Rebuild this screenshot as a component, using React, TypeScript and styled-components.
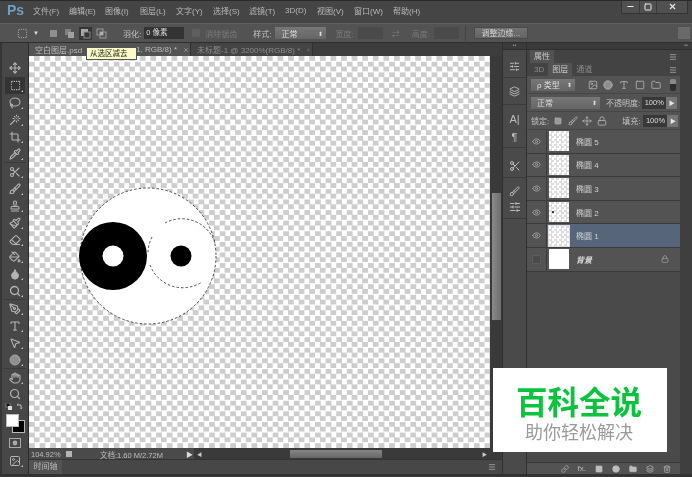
import React from "react";
import styled, { createGlobalStyle } from "styled-components";
import {
  Brush,
  Circle,
  Crop,
  Droplet,
  Eraser,
  Eye,
  Folder,
  Hand,
  Image,
  Lasso,
  Layers,
  Link,
  Lock,
  Menu,
  Minus,
  MousePointer2,
  Move,
  PaintBucket,
  Paintbrush,
  PenTool,
  Pipette,
  Scissors,
  Search,
  SlidersHorizontal,
  Square,
  SquareDashed,
  Stamp,
  Trash2,
  Type,
  Wand,
  X,
} from "lucide-react";

const GlobalStyle = createGlobalStyle`
  html, body {
    margin: 0;
    padding: 0;
    background: #2f2f2f;
  }
  * {
    box-sizing: border-box;
  }
`;

const fontStack = `"Liberation Sans", "Noto Sans CJK SC", sans-serif`;

const Window = styled.div`
  position: relative;
  width: 692px;
  height: 477px;
  overflow: hidden;
  display: flex;
  flex-direction: column;
  padding-bottom: 3px;
  background: #333;
  color: #c4c4c4;
  font-family: ${fontStack};
  font-size: 8px;
  filter: blur(0.3px);
`;

const MenuBar = styled.div`
  height: 23px;
  display: flex;
  align-items: center;
  padding-bottom: 4px;
  background: #454545;
  border-top: 1px solid #2a2a2a;
  flex: none;
`;

const Logo = styled.div`
  width: 33px;
  padding-left: 7px;
  font-size: 14px;
  font-weight: 700;
  color: #6f9fc6;
`;

const MenuItem = styled.span<{ $w: number }>`
  width: ${(p) => p.$w}px;
  flex: none;
  font-size: 8px;
  color: #b8b8b8;
`;

const WindowButtons = styled.div`
  margin-left: auto;
  margin-right: 4px;
  margin-top: -6px;
  height: 13px;
  display: flex;
  background: #505050;
  border: 1px solid #333;
  border-top: none;
`;

const WindowButton = styled.div<{ $w: number }>`
  width: ${(p) => p.$w}px;
  display: flex;
  align-items: center;
  justify-content: center;
  color: #e8e8e8;
  border-left: 1px solid #393939;
  &:first-child {
    border-left: none;
  }
`;

const OptionsBar = styled.div`
  height: 20px;
  flex: none;
  display: flex;
  align-items: center;
  background: #535353;
  border-top: 1px solid #5e5e5e;
  border-bottom: 1px solid #2e2e2e;
  padding-left: 17px;
`;

const OptionIcon = styled.div<{ $active?: boolean; $ml?: number }>`
  width: 13px;
  height: 13px;
  margin-left: ${(p) => p.$ml ?? 3}px;
  display: flex;
  align-items: center;
  justify-content: center;
  background: ${(p) => (p.$active ? "#363636" : "transparent")};
`;

const OptionLabel = styled.span<{ $ml: number; $dim?: boolean }>`
  margin-left: ${(p) => p.$ml}px;
  flex: none;
  font-size: 8px;
  color: ${(p) => (p.$dim ? "#7a7a7a" : "#c4c4c4")};
`;

const DarkInput = styled.div<{ $w: number; $ml: number; $flat?: boolean }>`
  width: ${(p) => p.$w}px;
  margin-left: ${(p) => p.$ml}px;
  height: 12px;
  flex: none;
  background: ${(p) => (p.$flat ? "#4a4a4a" : "#333")};
  color: #ddd;
  font-size: 7.5px;
  line-height: 12px;
  padding-left: 2px;
`;

const Select = styled.div<{ $w: number; $ml: number }>`
  width: ${(p) => p.$w}px;
  margin-left: ${(p) => p.$ml}px;
  height: 12px;
  flex: none;
  display: flex;
  justify-content: space-between;
  align-items: center;
  padding: 0 3px 0 6px;
  background: linear-gradient(#777, #656565);
  color: #dedede;
  font-size: 8px;
`;

const Caret = styled.span<{ $ml?: number }>`
  margin-left: ${(p) => p.$ml ?? 0}px;
  font-size: 6px;
  color: #ddd;
`;

const CheckBox = styled.div<{ $ml: number }>`
  width: 8px;
  height: 8px;
  margin-left: ${(p) => p.$ml}px;
  flex: none;
  background: #5f5f5f;
`;

const Separator = styled.div<{ $ml: number }>`
  width: 1px;
  height: 15px;
  margin-left: ${(p) => p.$ml}px;
  flex: none;
  background: #434343;
`;

const RefineButton = styled.div`
  width: 54px;
  height: 12px;
  margin-left: 8px;
  flex: none;
  text-align: center;
  line-height: 11px;
  font-size: 8px;
  color: #d0d0d0;
  background: linear-gradient(#727272, #646464);
  border: 1px solid #4a4a4a;
`;

const EdgeButton = styled.div`
  width: 12px;
  height: 12px;
  margin-left: auto;
  margin-right: 2px;
  flex: none;
  background: #6a6a6a;
`;

const Body = styled.div`
  flex: 1;
  display: flex;
  min-height: 0;
`;

const ToolColumn = styled.div`
  width: 29px;
  flex: none;
  display: flex;
  flex-direction: column;
  align-items: center;
  background: #474747;
  border-left: 2px solid #363636;
  border-right: 1px solid #2b2b2b;
  padding-top: 16px;
`;

const Tool = styled.div<{ $active?: boolean; $flyout?: boolean; $mt?: number }>`
  position: relative;
  width: 20px;
  height: 17px;
  flex: none;
  margin-top: ${(p) => p.$mt ?? 0}px;
  display: flex;
  align-items: center;
  justify-content: center;
  color: #b4b4b4;
  background: ${(p) => (p.$active ? "#343434" : "transparent")};
  &::after {
    content: "";
    display: ${(p) => (p.$flyout ? "block" : "none")};
    position: absolute;
    right: 2px;
    bottom: 2px;
    border-left: 2px solid transparent;
    border-bottom: 2px solid #c8c8c8;
  }
`;

const ToolDivider = styled.div<{ $mb?: number }>`
  width: 22px;
  height: 1px;
  flex: none;
  margin-bottom: ${(p) => p.$mb ?? 0}px;
  background: #3a3a3a;
`;

const ColorSwatches = styled.div`
  position: relative;
  width: 20px;
  height: 32px;
  flex: none;
`;

const Swatch = styled.div<{ $fg?: boolean }>`
  position: absolute;
  width: 13px;
  height: 13px;
  left: ${(p) => (p.$fg ? 1 : 7)}px;
  top: ${(p) => (p.$fg ? 12 : 18)}px;
  background: ${(p) => (p.$fg ? "#fff" : "#000")};
  border: 1px solid #bbb;
  z-index: ${(p) => (p.$fg ? 1 : 0)};
`;

const MiniColors = styled.svg`
  position: absolute;
  left: 0;
  top: 1px;
`;

const Center = styled.div`
  width: 473px;
  flex: none;
  display: flex;
  flex-direction: column;
`;

const TabBar = styled.div`
  height: 13px;
  flex: none;
  display: flex;
  background: #3d3d3d;
`;

const DocTab = styled.div<{ $active?: boolean; $w: number }>`
  width: ${(p) => p.$w}px;
  flex: none;
  display: flex;
  align-items: center;
  padding: 0 1px 0 6px;
  white-space: nowrap;
  overflow: hidden;
  font-size: 8px;
  background: ${(p) => (p.$active ? "#535353" : "#444")};
  color: ${(p) => (p.$active ? "#bbb" : "#8c8c8c")};
  border-right: 1px solid #303030;
`;

const TabTail = styled.span`
  margin-left: auto;
  margin-right: 6px;
`;

const CanvasRow = styled.div`
  flex: 1;
  display: flex;
  min-height: 0;
`;

const Canvas = styled.div`
  flex: 1;
  position: relative;
  background-color: #fff;
  background-image: conic-gradient(
    #cdcdcd 25%,
    #fff 0 50%,
    #cdcdcd 0 75%,
    #fff 0
  );
  background-size: 10.6px 10.6px;
`;

const Artwork = styled.svg`
  position: absolute;
  left: 50px;
  top: 131px;
`;

const VScroll = styled.div`
  width: 12px;
  flex: none;
  display: flex;
  flex-direction: column;
  align-items: center;
  background: #3a3a3a;
  padding-top: 137px;
`;

const VThumb = styled.div`
  width: 9px;
  height: 127px;
  background: linear-gradient(90deg, #8b8b8b, #6d6d6d);
`;

const StatusRow = styled.div`
  height: 11px;
  flex: none;
  display: flex;
  align-items: center;
  background: #4a4a4a;
`;

const StatusText = styled.span<{ $w: number }>`
  width: ${(p) => p.$w}px;
  flex: none;
  padding-left: 2px;
  padding-top: 1px;
  font-size: 7.5px;
  color: #bdbdbd;
`;

const StatusIcon = styled.div`
  width: 6px;
  height: 6px;
  flex: none;
  margin-right: 26px;
  background: #b5b5b5;
`;

const PlayArrow = styled.span`
  width: 8px;
  flex: none;
  font-size: 7px;
  color: #ddd;
`;

const HScroll = styled.div`
  flex: 1;
  height: 100%;
  display: flex;
  align-items: center;
  background: #3a3a3a;
  padding: 0 15px 0 3px;
  font-size: 5px;
  color: #ccc;
`;

const HThumb = styled.div`
  width: 92px;
  height: 8px;
  margin-left: 88px;
  margin-right: auto;
  background: linear-gradient(#858585, #666);
`;

const TimelineStrip = styled.div`
  height: 14px;
  flex: none;
  display: flex;
  margin-top: 1px;
  background: #474747;
`;

const TimelineTab = styled.div`
  width: 33px;
  text-align: center;
  background: #535353;
  color: #bcbcbc;
  font-size: 8px;
  line-height: 13px;
`;

const PanelMenu = styled.div<{ $mr?: number }>`
  margin-left: auto;
  margin-right: ${(p) => p.$mr ?? 3}px;
  display: flex;
  align-items: center;
  color: #bbb;
`;

const Dock = styled.div`
  width: 25px;
  flex: none;
  display: flex;
  flex-direction: column;
  background: #4a4a4a;
  border-left: 1px solid #2f2f2f;
  border-right: 1px solid #2f2f2f;
`;

const CollapseStrip = styled.div`
  height: 7px;
  flex: none;
  background: #3b3b3b;
  border-bottom: 1px solid #2e2e2e;
  color: #999;
  font-size: 5px;
  line-height: 5px;
  text-align: center;
`;

const DockGroup = styled.div<{ $h: number; $pb?: number }>`
  height: ${(p) => p.$h}px;
  flex: none;
  display: flex;
  flex-direction: column;
  align-items: center;
  justify-content: flex-end;
  gap: 4px;
  padding-bottom: ${(p) => p.$pb ?? 5}px;
  border-bottom: 1px solid #3a3a3a;
  color: #bdbdbd;
`;

const DockText = styled.span`
  font-size: 11px;
  color: #bdbdbd;
  line-height: 14px;
`;

const Panels = styled.div`
  width: 153px;
  flex: none;
  display: flex;
  flex-direction: column;
  background: #535353;
`;

const PanelTabs = styled.div`
  height: 13px;
  flex: none;
  display: flex;
  background: #434343;
  padding-left: 3px;
`;

const PanelTab = styled.div<{ $active?: boolean }>`
  padding: 0 4px;
  font-size: 8px;
  line-height: 13px;
  background: ${(p) => (p.$active ? "#535353" : "transparent")};
  color: ${(p) => (p.$active ? "#c8c8c8" : "#8b8b8b")};
`;

const PanelRow = styled.div<{ $h: number }>`
  height: ${(p) => p.$h}px;
  flex: none;
  display: flex;
  align-items: center;
  padding-left: 4px;
  border-bottom: 1px solid #464646;
`;

const RowIcon = styled.div<{ $ml: number }>`
  margin-left: ${(p) => p.$ml}px;
  display: flex;
  color: #b4b4b4;
`;

const FilterSwitch = styled.div`
  width: 6px;
  height: 12px;
  margin-left: 9px;
  flex: none;
  border-radius: 2px;
  background: linear-gradient(#8a8a8a 45%, #2e2e2e 45%);
`;

const PercentBox = styled.div<{ $ml: number }>`
  width: 24px;
  height: 12px;
  margin-left: ${(p) => p.$ml}px;
  flex: none;
  background: #383838;
  color: #ddd;
  font-size: 7.5px;
  line-height: 12px;
  text-align: center;
`;

const PercentArrow = styled.div`
  width: 11px;
  height: 12px;
  flex: none;
  background: #747474;
  color: #e6e6e6;
  text-align: center;
  font-size: 6px;
  line-height: 12px;
`;

const LayerList = styled.div`
  flex: 1;
  display: flex;
  flex-direction: column;
  background: #4a4a4a;
`;

const LayerRow = styled.div<{ $selected?: boolean }>`
  height: 23.6px;
  flex: none;
  display: flex;
  align-items: center;
  border-bottom: 1px solid #3b3b3b;
  background: ${(p) => (p.$selected ? "#56657a" : "#535353")};
  color: #cfcfcf;
  font-size: 8px;
`;

const EyeCell = styled.div`
  width: 20px;
  flex: none;
  height: 100%;
  display: flex;
  align-items: center;
  justify-content: center;
  color: #b0b0b0;
  background: #535353;
  border-right: 1px solid #3b3b3b;
`;

const EmptyBox = styled.div`
  width: 9px;
  height: 9px;
  background: #4b4b4b;
  border: 1px solid #5c5c5c;
`;

const Thumb = styled.div<{ $solid?: boolean; $selected?: boolean }>`
  width: 20px;
  height: 20px;
  margin-left: 2px;
  flex: none;
  display: flex;
  align-items: center;
  justify-content: center;
  background-color: #fff;
  background-image: ${(p) =>
    p.$solid
      ? "none"
      : "conic-gradient(#dcdcdc 25%, #fff 0 50%, #dcdcdc 0 75%, #fff 0)"};
  background-size: 5px 5px;
  outline: ${(p) => (p.$selected ? "1px solid #ddd" : "none")};
`;

const Dot = styled.div`
  width: 2px;
  height: 2px;
  margin: 0 13px 0 0;
  border-radius: 50%;
  background: #000;
`;

const LayerName = styled.span<{ $italic?: boolean }>`
  margin-left: 7px;
  font-style: ${(p) => (p.$italic ? "italic" : "normal")};
  font-weight: ${(p) => (p.$italic ? 700 : 400)};
  color: ${(p) => (p.$italic ? "#ddd" : "#cfcfcf")};
`;

const LayerLock = styled.div`
  margin-left: auto;
  margin-right: 11px;
  display: flex;
  color: #a8a8a8;
`;

const PanelFooter = styled.div`
  height: 12px;
  flex: none;
  display: flex;
  align-items: center;
  justify-content: flex-end;
  gap: 9px;
  padding-right: 9px;
  background: #535353;
  border-top: 1px solid #383838;
  color: #bdbdbd;
  font-size: 8px;
`;

const RightStrip = styled.div`
  flex: 1;
  display: flex;
  flex-direction: column;
  background: #3f3f3f;
`;

const Tooltip = styled.div`
  position: absolute;
  left: 86px;
  top: 47px;
  width: 51px;
  height: 13px;
  background: #fbfbc8;
  border: 1px solid #555;
  color: #222;
  font-size: 7.5px;
  line-height: 11px;
  padding-left: 3px;
  white-space: nowrap;
`;

const Watermark = styled.div`
  position: absolute;
  left: 493px;
  top: 368px;
  width: 174px;
  height: 84px;
  padding-right: 2px;
  background: #fff;
  display: flex;
  flex-direction: column;
  align-items: center;
`;

const WatermarkTitle = styled.div`
  margin-top: 14px;
  font-size: 31.5px;
  line-height: 36px;
  font-weight: 700;
  color: #0cc23f;
  font-family: "Noto Sans CJK SC", sans-serif;
`;

const WatermarkSub = styled.div`
  margin-top: 1px;
  font-size: 18px;
  line-height: 24px;
  color: #9a9a9a;
  font-family: "Noto Sans CJK SC", sans-serif;
`;

const menus: [string, number][] = [
  ["文件(F)", 36],
  ["编辑(E)", 36],
  ["图像(I)", 35],
  ["图层(L)", 36],
  ["文字(Y)", 37],
  ["选择(S)", 36],
  ["滤镜(T)", 36],
  ["3D(D)", 32],
  ["视图(V)", 37],
  ["窗口(W)", 39],
  ["帮助(H)", 40],
];

const layers = ["椭圆 5", "椭圆 4", "椭圆 3", "椭圆 2", "椭圆 1"];

// selection mode buttons in the options bar
const ModeIcon = ({ mode }: { mode: "new" | "add" | "sub" | "and" }) => (
  <svg width="11" height="11" viewBox="0 0 11 11">
    {mode === "new" && <rect x="2" y="2" width="7" height="7" fill="#8f8f8f" />}
    {mode === "add" && (
      <>
        <rect x="1" y="1" width="6" height="6" fill="#808080" />
        <rect x="4" y="4" width="6" height="6" fill="#a0a0a0" />
      </>
    )}
    {mode === "sub" && (
      <>
        <rect x="1" y="1" width="7" height="7" fill="#a8a8a8" />
        <rect x="4" y="4" width="6" height="6" fill="#363636" stroke="#8a8a8a" />
      </>
    )}
    {mode === "and" && (
      <>
        <rect x="1" y="1" width="6" height="6" fill="none" stroke="#9a9a9a" />
        <rect x="4" y="4" width="6" height="6" fill="none" stroke="#9a9a9a" />
        <rect x="4" y="4" width="3" height="3" fill="#b0b0b0" />
      </>
    )}
  </svg>
);

export default function App() {
  return (
    <>
      <GlobalStyle />
      <Window>
        <MenuBar>
          <Logo>Ps</Logo>
          {menus.map(([label, w]) => (
            <MenuItem key={label} $w={w}>
              {label}
            </MenuItem>
          ))}
          <WindowButtons>
            <WindowButton $w={17}>
              <Minus size={9} strokeWidth={3} />
            </WindowButton>
            <WindowButton $w={17}>
              <Square size={8} strokeWidth={3} />
            </WindowButton>
            <WindowButton $w={31}>
              <X size={9} strokeWidth={3} />
            </WindowButton>
          </WindowButtons>
        </MenuBar>

        <OptionsBar>
          <SquareDashed size={11} color="#aaa" />
          <Caret $ml={5}>▼</Caret>
          <OptionIcon $ml={8}>
            <ModeIcon mode="new" />
          </OptionIcon>
          <OptionIcon>
            <ModeIcon mode="add" />
          </OptionIcon>
          <OptionIcon $active>
            <ModeIcon mode="sub" />
          </OptionIcon>
          <OptionIcon>
            <ModeIcon mode="and" />
          </OptionIcon>
          <OptionLabel $ml={15}>羽化:</OptionLabel>
          <DarkInput $w={40} $ml={3}>
            0 像素
          </DarkInput>
          <CheckBox $ml={8} />
          <OptionLabel $ml={5} $dim>
            消除锯齿
          </OptionLabel>
          <OptionLabel $ml={16}>样式:</OptionLabel>
          <Select $w={51} $ml={4}>
            正常 <Caret>⬍</Caret>
          </Select>
          <OptionLabel $ml={9} $dim>
            宽度:
          </OptionLabel>
          <DarkInput $w={25} $ml={4} $flat />
          <OptionLabel $ml={9} $dim>
            ⇄
          </OptionLabel>
          <OptionLabel $ml={12} $dim>
            高度:
          </OptionLabel>
          <DarkInput $w={25} $ml={4} $flat />
          <Separator $ml={6} />
          <RefineButton>调整边缘...</RefineButton>
          <EdgeButton />
        </OptionsBar>

        <Body>
          <ToolColumn>
            <Tool>
              <Move size={12} strokeWidth={2.2} />
            </Tool>
            <Tool $active $flyout $mt={1}>
              <SquareDashed size={11} strokeWidth={2.2} />
            </Tool>
            <Tool $flyout>
              <Lasso size={12} strokeWidth={2.2} />
            </Tool>
            <Tool $flyout>
              <Wand size={12} strokeWidth={2.2} />
            </Tool>
            <Tool $flyout>
              <Crop size={12} strokeWidth={2.2} />
            </Tool>
            <Tool $flyout>
              <Pipette size={12} strokeWidth={2.2} />
            </Tool>
            <ToolDivider />
            <Tool $flyout>
              <Scissors size={12} strokeWidth={2.2} />
            </Tool>
            <Tool $flyout>
              <Brush size={12} strokeWidth={2.2} />
            </Tool>
            <Tool $flyout>
              <Stamp size={12} strokeWidth={2.2} />
            </Tool>
            <Tool $flyout>
              <Paintbrush size={12} strokeWidth={2.2} />
            </Tool>
            <Tool $flyout>
              <Eraser size={12} strokeWidth={2.2} />
            </Tool>
            <Tool $flyout>
              <PaintBucket size={12} strokeWidth={2.2} />
            </Tool>
            <Tool $flyout>
              <Droplet size={12} fill="#b4b4b4" />
            </Tool>
            <Tool $flyout>
              <Search size={12} strokeWidth={2.6} />
            </Tool>
            <ToolDivider />
            <Tool $flyout>
              <PenTool size={12} strokeWidth={2.2} />
            </Tool>
            <Tool $flyout>
              <Type size={12} strokeWidth={2.2} />
            </Tool>
            <Tool $flyout>
              <MousePointer2 size={12} strokeWidth={2.2} />
            </Tool>
            <Tool $flyout>
              <Circle size={12} fill="#8f8f8f" strokeWidth={1.6} />
            </Tool>
            <ToolDivider />
            <Tool $flyout>
              <Hand size={12} strokeWidth={2.2} />
            </Tool>
            <Tool $mt={-1}>
              <Search size={12} strokeWidth={2.4} />
            </Tool>
            <ColorSwatches>
              <MiniColors width="20" height="8" viewBox="0 0 20 8">
                <rect x="1" y="0" width="4" height="4" fill="#111" stroke="#aaa" strokeWidth="0.6" />
                <rect x="3" y="3" width="4" height="4" fill="#ddd" />
                <path d="M12 2 L16 2 L16 6 M12 2 L13.5 1 M16 6 L17 4.5" fill="none" stroke="#bbb" strokeWidth="1" />
              </MiniColors>
              <Swatch $fg />
              <Swatch />
            </ColorSwatches>
            <Tool>
              <svg width="12" height="10" viewBox="0 0 12 10">
                <rect x="0.5" y="0.5" width="11" height="9" fill="none" stroke="#aaa" />
                <circle cx="6" cy="5" r="2.4" fill="#aaa" />
              </svg>
            </Tool>
            <Tool $flyout $mt={1}>
              <Image size={12} strokeWidth={2} />
            </Tool>
          </ToolColumn>

          <Center>
            <TabBar>
              <DocTab $active $w={162}>
                <span>空白图层.psd</span>
                <TabTail>1, RGB/8) *</TabTail>
                <X size={6} />
              </DocTab>
              <DocTab $w={122}>
                <span>未标题-1 @ 3200%(RGB/8) *</span>
                <TabTail />
                <X size={6} />
              </DocTab>
            </TabBar>
            <CanvasRow>
              <Canvas>
                <Artwork width={140} height={140} viewBox="0 0 140 140">
                  <circle cx="69" cy="69" r="68" fill="#fff" />
                  <circle
                    cx="69"
                    cy="69"
                    r="68"
                    fill="none"
                    stroke="#222"
                    strokeWidth="0.8"
                    strokeDasharray="2.5 2"
                  />
                  <circle cx="34" cy="69" r="34" fill="#000" />
                  <circle cx="34" cy="69" r="10.5" fill="#fff" />
                  <circle cx="102" cy="69" r="10.5" fill="#000" />
                  <path
                    d="M86 36 A35 35 0 0 1 136 56 M73 50 A35 35 0 0 0 69 65 M71 78 A35 35 0 0 0 123 95"
                    fill="none"
                    stroke="#222"
                    strokeWidth="0.8"
                    strokeDasharray="2.5 2"
                  />
                </Artwork>
              </Canvas>
              <VScroll>
                <VThumb />
              </VScroll>
            </CanvasRow>
            <StatusRow>
              <StatusText $w={37}>104.92%</StatusText>
              <StatusIcon />
              <StatusText $w={88}>文档:1.60 M/2.72M</StatusText>
              <PlayArrow>▶</PlayArrow>
              <HScroll>
                <span>◀</span>
                <HThumb />
                <span>▶</span>
              </HScroll>
            </StatusRow>
            <TimelineStrip>
              <TimelineTab>时间轴</TimelineTab>
              <PanelMenu $mr={6}>
                <Menu size={8} />
              </PanelMenu>
            </TimelineStrip>
          </Center>

          <Dock>
            <CollapseStrip>••</CollapseStrip>
            <DockGroup $h={28}>
              <SlidersHorizontal size={11} />
            </DockGroup>
            <DockGroup $h={27} $pb={7}>
              <Layers size={11} />
            </DockGroup>
            <DockGroup $h={43} $pb={3}>
              <DockText>A|</DockText>
              <DockText>¶</DockText>
            </DockGroup>
            <DockGroup $h={30}>
              <Scissors size={12} />
            </DockGroup>
            <DockGroup $h={41}>
              <Brush size={11} />
              <SlidersHorizontal size={12} />
            </DockGroup>
          </Dock>

          <Panels>
            <CollapseStrip />
            <PanelTabs>
              <PanelTab $active>属性</PanelTab>
              <PanelMenu>
                <Menu size={8} />
              </PanelMenu>
            </PanelTabs>
            <PanelTabs>
              <PanelTab>3D</PanelTab>
              <PanelTab $active>图层</PanelTab>
              <PanelTab>通道</PanelTab>
              <PanelMenu>
                <Menu size={8} />
              </PanelMenu>
            </PanelTabs>
            <PanelRow $h={18}>
              <Select $w={44} $ml={0}>
                ρ 类型 <Caret>⬍</Caret>
              </Select>
              <RowIcon $ml={13}>
                <Image size={10} />
              </RowIcon>
              <RowIcon $ml={5}>
                <Circle size={10} fill="#8f8f8f" />
              </RowIcon>
              <RowIcon $ml={6}>
                <Type size={10} />
              </RowIcon>
              <RowIcon $ml={6}>
                <Square size={10} />
              </RowIcon>
              <RowIcon $ml={6}>
                <Folder size={10} />
              </RowIcon>
              <FilterSwitch />
            </PanelRow>
            <PanelRow $h={18}>
              <Select $w={69} $ml={0}>
                正常 <Caret>⬍</Caret>
              </Select>
              <OptionLabel $ml={6}>不透明度:</OptionLabel>
              <PercentBox $ml={2}>100%</PercentBox>
              <PercentArrow>▶</PercentArrow>
            </PanelRow>
            <PanelRow $h={18}>
              <OptionLabel $ml={0}>锁定:</OptionLabel>
              <RowIcon $ml={5}>
                <Square size={8} fill="#999" />
              </RowIcon>
              <RowIcon $ml={6}>
                <Brush size={10} />
              </RowIcon>
              <RowIcon $ml={4}>
                <Move size={10} />
              </RowIcon>
              <RowIcon $ml={5}>
                <Lock size={10} />
              </RowIcon>
              <OptionLabel $ml={15}>填充:</OptionLabel>
              <PercentBox $ml={3}>100%</PercentBox>
              <PercentArrow>▶</PercentArrow>
            </PanelRow>
            <LayerList>
              {layers.map((name, i) => (
                <LayerRow key={name} $selected={i === 4}>
                  <EyeCell>
                    <Eye size={9} />
                  </EyeCell>
                  <Thumb $selected={i === 4}>{i === 3 && <Dot />}</Thumb>
                  <LayerName>{name}</LayerName>
                </LayerRow>
              ))}
              <LayerRow>
                <EyeCell>
                  <EmptyBox />
                </EyeCell>
                <Thumb $solid />
                <LayerName $italic>背景</LayerName>
                <LayerLock>
                  <Lock size={8} />
                </LayerLock>
              </LayerRow>
            </LayerList>
            <PanelFooter>
              <Link size={8} />
              <span>fx.</span>
              <Square size={8} fill="#bdbdbd" />
              <Circle size={8} fill="#bdbdbd" />
              <Folder size={8} fill="#bdbdbd" />
              <Layers size={8} />
              <Trash2 size={8} />
            </PanelFooter>
          </Panels>
          <RightStrip>
            <CollapseStrip>••</CollapseStrip>
          </RightStrip>
        </Body>

        <Tooltip>从选区减去</Tooltip>
        <Watermark>
          <WatermarkTitle>百科全说</WatermarkTitle>
          <WatermarkSub>助你轻松解决</WatermarkSub>
        </Watermark>
      </Window>
    </>
  );
}
